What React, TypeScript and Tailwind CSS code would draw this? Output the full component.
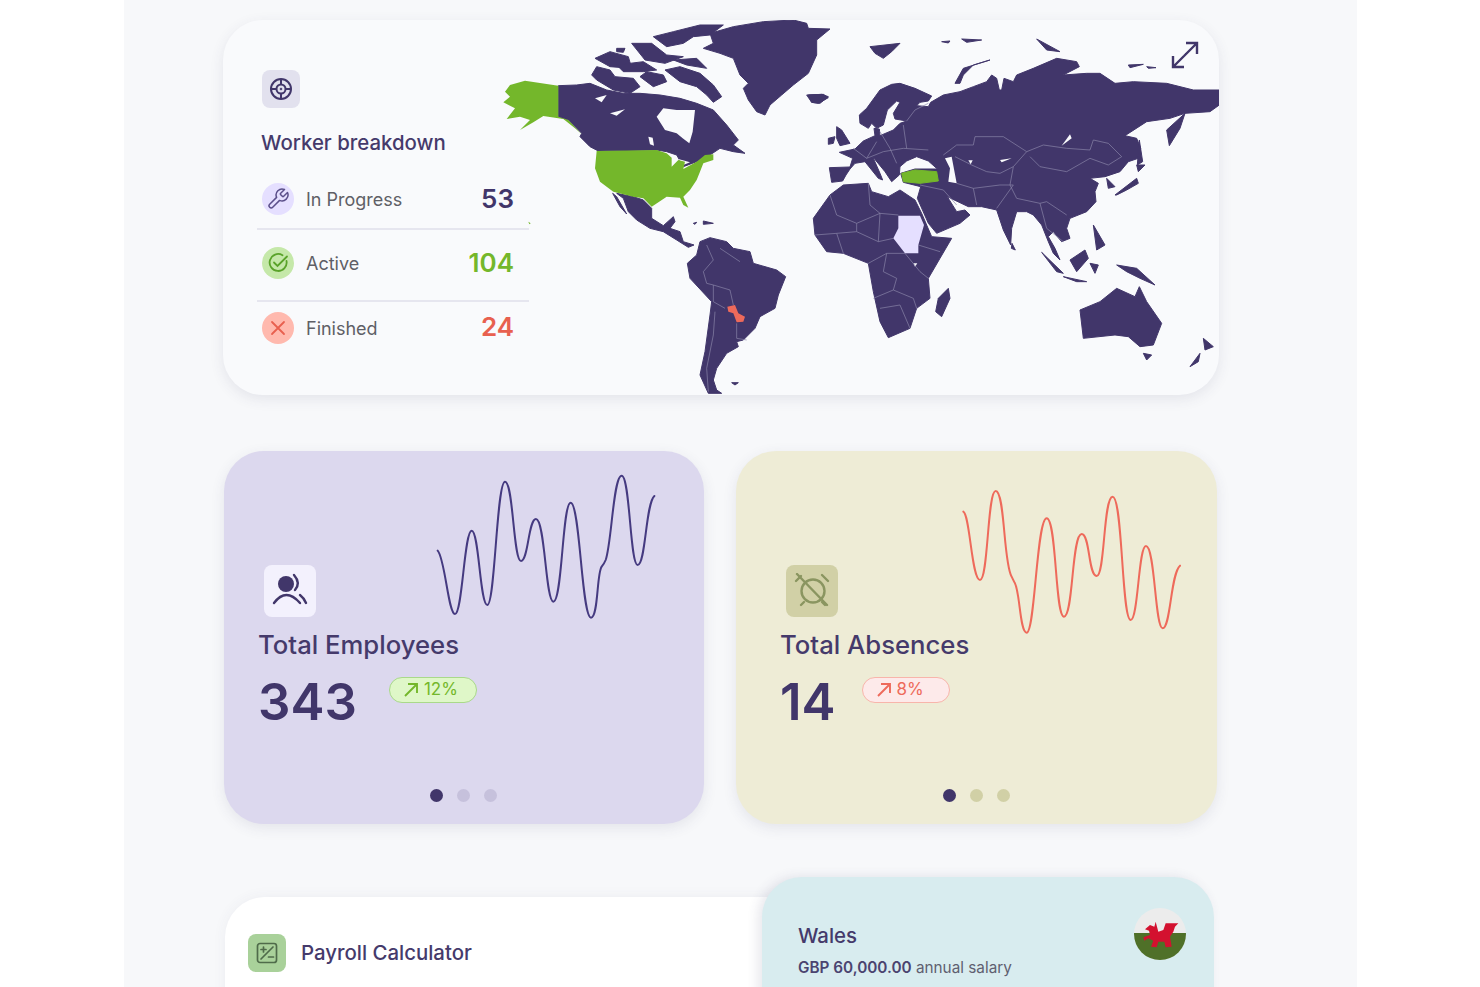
const font = "font-['Inter',sans-serif]";

function ZoomA({ children }: { children: React.ReactNode }) {
  return <g transform="translate(500 15) scale(0.33333)">{children}</g>;
}

function ZoomB({ children }: { children: React.ReactNode }) {
  return <g transform="translate(800 15) scale(0.33333)">{children}</g>;
}

const dark = "#41366a";
const sea = "#f9fafc";
const line = "#8d88aa";
const green = "#74b72b";

const americas = [
  "175,212 230,210 270,205 320,225 370,235 420,235 480,240 540,250 590,265 640,285 680,330 715,375 700,390 735,415 700,410 660,400 630,420 590,440 550,455 530,420 500,410 470,405 295,408 270,395 240,365 245,355 205,315 175,305",
  "275,180 290,155 330,165 345,185 400,190 420,215 390,235 340,225 290,195",
  "285,130 330,110 385,125 395,160 330,155",
  "460,65 520,50 600,30 670,30 630,60 580,65 550,85 500,95",
  "395,85 455,85 500,120 550,125 495,145 435,135",
  "350,150 430,140 470,165 430,170 370,170",
  "520,135 590,130 620,160 560,150",
  "495,165 540,155 600,175 640,210 665,245 640,262 620,240 590,215 540,200",
  "440,170 490,180 500,200 460,215 420,185",
  "350,100 375,100 370,112 350,110",
  "630,55 700,35 790,20 880,15 920,25 925,40 990,42 950,75 950,120 925,175 880,210 845,240 810,270 795,300 770,290 745,255 730,220 745,205 720,180 700,130 660,115 610,100 640,85",
  "925,240 965,238 985,245 960,265 935,262",
  "350,535 400,545 430,555 455,580 455,610 490,632 520,605 525,620 510,640 540,650 550,680 582,690 565,697 530,675 490,650 450,640 410,615 385,590 370,550",
  "338,535 350,545 380,597 360,575",
  "580,625 590,622 585,628",
  "610,618 640,625 610,628",
  "600,680 630,668 680,680 700,700 750,710 760,745 830,765 857,785 835,840 825,880 780,905 765,940 730,975 710,980 715,995 680,1015 650,1060 640,1095 650,1125 665,1135 625,1135 600,1080 615,1010 630,900 635,860 570,790 562,745 590,720",
  "695,1103 715,1103 705,1110",
];

const americaLakes = [
  "470,305 490,280 530,285 585,285 578,350 568,385 548,370 530,355 495,345",
  "285,250 320,240 305,262",
  "330,295 375,283 350,302",
  "445,365 458,368 462,392 450,388",
  "520,425 530,430 520,458 515,450",
  "535,432 570,442 550,450",
];

const eurasia = [
  "88,458 150,456 158,430 118,412 165,402 190,378 225,362 222,340 238,342 240,362 280,345 300,325 320,318 285,312 280,295 300,262 290,258 262,285 250,330 230,340 215,325 205,340 180,325 178,300 200,280 240,225 275,208 300,205 345,220 395,243 385,258 360,262 350,272 385,275 392,262 430,240 480,230 520,215 560,200 575,180 590,190 598,225 605,225 612,190 640,200 650,180 700,160 770,130 830,140 838,155 790,180 860,175 900,175 945,205 1000,200 1100,205 1180,225 1260,225 1258,270 1230,290 1155,295 1110,310 1040,320 975,362 1010,370 1022,400 1015,430 985,440 960,470 915,485 870,490 895,505 885,530 888,560 860,590 810,610 800,640 810,670 785,680 760,650 745,665 765,700 780,735 760,715 745,680 725,630 700,600 680,590 650,590 635,640 632,690 610,645 590,585 545,575 505,575 442,545 470,590 495,585 510,600 480,625 410,655 385,625 352,550 362,515 310,502 302,475 345,462 412,462 385,438 350,425 320,438 300,455 298,480 275,500 255,470 218,425 240,475 248,495 235,490 195,440 165,445 150,462 138,480 128,498 95,502",
  "210,95 300,85 275,110 250,130 225,115",
  "425,80 450,78 445,84",
  "485,72 545,75 500,82",
  "465,205 490,160 570,135 520,150 490,180 480,205",
  "1018,375 1028,440 1012,450",
  "1155,295 1140,340 1108,392 1100,345",
  "945,540 1010,490 1015,505 980,525 950,540",
  "1010,450 1035,450 1015,470",
  "985,150 1030,148 990,158",
  "1040,155 1068,158 1045,160",
  "710,72 780,110 740,105",
  "725,712 790,775 770,770",
  "790,785 860,800 830,800",
  "810,735 855,705 865,730 830,770",
  "870,745 895,750 885,775",
  "950,750 1010,760 1065,810 1020,790 980,770",
  "880,630 915,690 890,705",
  "840,885 900,860 950,820 1005,845 1018,815 1040,860 1085,925 1060,990 1020,995 985,965 945,960 850,970",
  "1030,1015 1055,1020 1040,1035",
  "1210,970 1240,995 1215,1005",
  "1200,1015 1170,1055 1195,1040",
  "636,685 646,705 634,700",
  "920,490 945,515 925,520",
  "40,610 90,540 130,510 205,505 215,530 265,545 300,525 345,555 365,595 395,665 455,670 420,730 385,790 390,850 350,880 330,940 265,968 240,920 220,830 205,745 130,715 80,710 45,660",
  "445,820 450,850 425,905 407,890 415,850",
  "110,335 125,345 150,385 120,392 110,370",
  "85,370 105,365 100,385 85,388",
  "20,240 70,238 85,248 55,265 35,262",
];

const seas = [
  "435,430 455,425 470,505 445,500 450,460",
  "810,358 815,370 785,392",
  "600,435 635,430 605,442",
  "505,436 518,436 512,448",
  "340,745 352,745 345,755",
];

const borders = [
  "430,420 470,390 520,390 525,365 610,365 680,410 640,455 600,475 560,470 515,450 465,425",
  "680,410 730,390 800,400 870,405 880,375 925,385 965,425 925,450 870,430 800,470 720,455 690,425",
  "640,455 630,510 650,550 720,565 740,560 800,600",
  "470,505 520,520 600,510 640,510 590,580",
  "360,510 430,525 470,570",
  "520,520 530,570",
  "720,565 740,640 790,680",
  "160,400 200,430 250,410 310,400 385,405",
  "240,350 270,400 290,445",
  "310,330 320,400",
  "200,430 230,380",
  "320,318 345,285 385,265",
  "90,540 110,600 170,625 240,595 295,600",
  "205,505 210,570 240,595 235,680",
  "45,660 110,655 170,650 235,680 280,670",
  "110,655 130,715",
  "170,625 170,650",
  "205,745 260,715 315,715 360,770 385,790",
  "260,715 250,770 290,790 280,825 220,850",
  "280,825 340,850 350,880",
  "240,880 300,870 330,940",
  "355,690 420,710",
];

const saBorders = [
  "620,690 640,735 610,770 620,805 640,810 640,860 675,880",
  "640,810 690,825 700,870",
  "660,700 720,740",
  "645,890 640,960 620,1060 625,1130",
  "710,925 710,970 740,975",
];

function WorldMap() {
  return (
    <svg className="absolute left-0 top-0 size-full" viewBox="223 20 996 375" fill="none">
      <ZoomA>
        {americas.map((p) => <polygon key={p} points={p} fill={dark} stroke={dark} strokeWidth="3" strokeLinejoin="round" />)}
        {americaLakes.map((p) => <polygon key={p} points={p} fill={sea} />)}
        <polygon points="75,197 175,212 175,305 205,315 245,358 225,340 190,312 130,303 100,322 60,345 90,315 60,305 20,312 45,280 10,262 30,245 15,230 30,210" fill={green} />
        <polygon points="290,408 470,405 500,415 515,428 515,455 535,435 555,440 550,462 590,440 615,420 640,418 640,435 610,445 600,470 590,495 570,525 550,545 565,578 550,570 540,548 500,545 455,575 430,550 400,545 340,530 300,500 285,460" fill={green} />
        <polygon points="85,620 92,625 88,628" fill={green} />
        <polygon points="682,875 705,870 715,895 735,905 730,920 710,922 700,895 685,890" fill="#ee6a5b" />
        {saBorders.map((p) => <polyline key={p} points={p} stroke={line} strokeWidth="2" />)}
      </ZoomA>
      <ZoomB>
        {eurasia.map((p) => <polygon key={p} points={p} fill={dark} stroke={dark} strokeWidth="3" strokeLinejoin="round" />)}
        {seas.map((p) => <polygon key={p} points={p} fill={sea} />)}
        {borders.map((p) => <polyline key={p} points={p} stroke={line} strokeWidth="2" />)}
        <polygon points="305,475 345,465 410,470 415,498 360,505 310,500" fill={green} stroke={green} strokeWidth="3" strokeLinejoin="round" />
        <polygon points="295,602 360,602 372,630 355,690 355,715 315,715 280,670 295,640" fill="#e5dfff" />
      </ZoomB>
      <path d="M1173 67 L1186 54 M1184 56 L1197 43 M1186 43 H1197 V54 M1173 56 V67 H1184" stroke={dark} strokeWidth="2.4" />
    </svg>
  );
}

function StatRow({ icon, bg, label, value, color }: { icon: React.ReactNode; bg: string; label: string; value: string; color: string }) {
  return (
    <div className="flex items-center pl-[5px] pr-[15px]">
      <div className={`flex size-8 items-center justify-center rounded-full ${bg}`}>{icon}</div>
      <span className="ml-3 flex-1 text-[18px] text-[#5f5f66]">{label}</span>
      <span className={`text-[26px] font-semibold leading-8 ${color}`}>{value}</span>
    </div>
  );
}

function WorkerCard() {
  return (
    <div className="relative h-[375px] w-[996px] rounded-[40px] bg-[#f9fafc] shadow-[0_4px_14px_rgba(60,60,100,0.1)]">
      <WorldMap />
      <div className="relative flex w-[306px] flex-col pl-[34px] pt-[50px]">
        <div className="ml-[5px] flex size-[38px] items-center justify-center rounded-lg bg-[#e2e1ee]">
          <svg className="size-6" viewBox="0 0 24 24" fill="none" stroke={dark} strokeWidth="2">
            <circle cx="12" cy="12" r="10" />
            <circle cx="12" cy="12" r="4.5" />
            <path d="M12 2v5.5M12 16.5V22M2 12h5.5M16.5 12H22" />
            <path d="M12 10.5l1.5 1.5-1.5 1.5-1.5-1.5z" fill={dark} stroke="none" />
          </svg>
        </div>
        <h2 className="ml-1 mt-[21px] text-[20.4px] font-medium leading-7 text-[#453a6b]">Worker breakdown</h2>
        <div className="mt-[26px]">
          <StatRow
            bg="bg-[#e5dfff]"
            label="In Progress"
            value="53"
            color="text-[#41366a]"
            icon={
              <svg className="size-6" viewBox="0 0 24 24" fill="none" stroke="#5b4f8a" strokeWidth="1.5" strokeLinejoin="round">
                <path d="M14.7 6.3a1 1 0 0 0 0 1.4l1.6 1.6a1 1 0 0 0 1.4 0l3.8-3.8a6 6 0 0 1-7.9 7.9l-6.9 6.9a2.1 2.1 0 0 1-3-3l6.9-6.9a6 6 0 0 1 7.9-7.9z" />
              </svg>
            }
          />
        </div>
        <div className="mt-[13px] h-0.5 bg-[#e6e6ef]" />
        <div className="mt-[17px]">
          <StatRow
            bg="bg-[#c5e8a9]"
            label="Active"
            value="104"
            color="text-[#74b72b]"
            icon={
              <svg className="size-6" viewBox="0 0 24 24" fill="none" stroke="#5aa32a" strokeWidth="1.8" strokeLinecap="round">
                <path d="M20.5 10a8.5 8.5 0 1 1-4-5.8" />
                <path d="M8 11.5l3.5 3.5L21 5.5" />
              </svg>
            }
          />
        </div>
        <div className="mt-[21px] h-0.5 bg-[#e6e6ef]" />
        <div className="mt-[9px]">
          <StatRow
            bg="bg-[#ffb9ae]"
            label="Finished"
            value="24"
            color="pb-[2px] text-[#e8604f]"
            icon={
              <svg className="size-6" viewBox="0 0 24 24" fill="none" stroke="#e8604f" strokeWidth="1.8" strokeLinecap="round">
                <path d="M6 6l12 12M18 6L6 18" />
              </svg>
            }
          />
        </div>
      </div>
    </div>
  );
}

function Spark({ d, color, x, y, viewBox }: { d: string; color: string; x: number; y: number; viewBox: string }) {
  return (
    <svg className="absolute left-0 top-0 size-full" viewBox={viewBox} fill="none">
      <g transform={`translate(${x} ${y}) scale(0.33333)`}>
        <path d={d} stroke={color} strokeWidth="6" strokeLinecap="round" />
      </g>
    </svg>
  );
}

function Trend({ value, cls, stroke }: { value: string; cls: string; stroke: string }) {
  return (
    <div className={`mt-1 flex h-[26px] w-[88px] items-center gap-[5px] rounded-full border pl-[13px] text-[17px] ${cls}`}>
      <svg className="size-4 shrink-0" viewBox="0 0 16 16" fill="none" stroke={stroke} strokeWidth="1.9">
        <path d="M2 14L14 2M5 2h9v9" />
      </svg>
      <span>{value}</span>
    </div>
  );
}

function Dots({ off, right }: { off: string; right: string }) {
  return (
    <div className={`absolute bottom-[22px] left-0 flex justify-center gap-[14px] ${right}`}>
      <div className="size-[13px] rounded-full bg-[#41366a]" />
      <div className={`size-[13px] rounded-full ${off}`} />
      <div className={`size-[13px] rounded-full ${off}`} />
    </div>
  );
}

function EmployeesCard() {
  return (
    <div className="relative h-[373px] w-[480px] rounded-[40px] bg-[#dcd8ee] pl-[34px] pt-[114px] shadow-[0_4px_14px_rgba(60,60,100,0.1)]">
      <Spark
        color="#453a80"
        viewBox="224 451 480 373"
        x={225}
        y={460}
        d="M638 272 C660 295 670 462 690 462 C712 462 718 212 740 212 C762 212 765 435 787 435 C810 435 815 65 840 65 C865 65 865 303 888 303 C910 303 910 177 933 177 C960 177 962 425 985 425 C1012 425 1012 128 1037 128 C1065 128 1070 473 1098 473 C1120 473 1115 340 1130 320 C1138 310 1140 305 1142 300 C1160 250 1165 47 1190 47 C1215 47 1215 315 1238 315 C1262 315 1262 130 1288 108"
      />
      <div className="relative ml-[6px] flex size-[52px] items-center justify-center rounded-lg bg-[#f3f1fd]">
        <svg className="size-9" viewBox="0 0 36 36" fill="none" stroke="#41366a" strokeWidth="2.4" strokeLinecap="round">
          <circle cx="14" cy="11" r="8" fill="#41366a" stroke="none" />
          <path d="M22 2Q29 10 23 17" />
          <path d="M2 30Q14 14 28 30" />
          <path d="M28 22Q32 25 34 30" />
        </svg>
      </div>
      <p className="relative mt-[13px] text-[25.7px] font-medium leading-[30px] text-[#453a6b]">Total Employees</p>
      <div className="relative mt-[13px] flex items-start">
        <span className="text-[51px] font-semibold leading-[58px] text-[#41366a]">343</span>
        <div className="ml-[32px]">
          <Trend value="12%" cls="border-[#a9d98a] bg-[#dff7c8] text-[#74b72b]" stroke="#74b72b" />
        </div>
      </div>
      <Dots off="bg-[#c6c1dc]" right="right-[2px]" />
    </div>
  );
}

function AbsencesCard() {
  return (
    <div className="relative h-[373px] w-[481px] rounded-[40px] bg-[#eeecd6] pl-[44px] pt-[114px] shadow-[0_4px_14px_rgba(60,60,100,0.1)]">
      <Spark
        color="#ee6a5b"
        viewBox="736 451 481 373"
        x={740}
        y={460}
        d="M670 155 C690 165 695 360 720 360 C745 360 742 93 767 93 C795 93 790 310 815 350 C820 360 822 365 825 370 C840 400 840 518 860 518 C885 518 890 175 920 175 C950 175 945 470 972 470 C1000 470 995 222 1025 222 C1050 222 1045 348 1070 348 C1095 348 1090 110 1118 110 C1148 110 1145 480 1172 480 C1195 480 1195 258 1218 258 C1245 258 1245 505 1268 505 C1292 505 1292 340 1320 317"
      />
      <div className="relative ml-[6px] flex size-[52px] items-center justify-center rounded-lg bg-[#d1d0a6]">
        <svg className="size-9" viewBox="0 0 36 36" fill="none" stroke="#8a9560" strokeWidth="2.4" strokeLinecap="round">
          <circle cx="19" cy="18" r="11.5" />
          <path d="M3 1L33 32" />
          <path d="M28 2L34 8M2 8L7 3M7 32L10 29M28 29L31 32" />
        </svg>
      </div>
      <p className="relative mt-[13px] text-[25.7px] font-medium leading-[30px] text-[#453a6b]">Total Absences</p>
      <div className="relative mt-[13px] flex items-start">
        <span className="text-[51px] font-semibold leading-[58px] text-[#41366a]">14</span>
        <div className="ml-[26px]">
          <Trend value="8%" cls="border-[#f8b5ab] bg-[#fdeaea] text-[#ee6a5b]" stroke="#ee6a5b" />
        </div>
      </div>
      <Dots off="bg-[#d1d0a6]" right="right-0" />
    </div>
  );
}

function WalesFlag() {
  return (
    <div className="size-[52px] overflow-hidden rounded-full bg-[#ececec]">
      <svg className="size-full" viewBox="0 0 52 52">
        <rect y="25" width="52" height="27" fill="#4f7028" />
        <g transform="translate(-9 -8) scale(0.33333)">
          <polygon
            points="60,88 75,75 88,80 92,65 100,95 115,90 122,70 160,70 150,80 145,95 135,110 140,140 122,142 118,125 100,125 95,142 78,140 85,122 70,115 58,122 55,112 75,105 72,92"
            fill="#d3112f"
          />
        </g>
      </svg>
    </div>
  );
}

function BottomRow() {
  return (
    <div className="mt-[53px] flex items-start pl-[2px]">
      <div className="mt-[20px] h-[200px] w-[580px] rounded-t-[40px] bg-white pl-[23px] pt-[37px] shadow-[0_0_14px_rgba(60,60,100,0.06)]">
        <div className="flex items-center gap-[15px]">
          <div className="flex size-[38px] items-center justify-center rounded-lg bg-[#a9d19a]">
            <svg className="size-6" viewBox="0 0 24 24" fill="none" stroke="#4f6b4a" strokeWidth="1.7" strokeLinecap="round">
              <rect x="2.5" y="2.5" width="19" height="19" rx="2.5" />
              <path d="M6 18L18 6M6 8.5h5M8.5 6v5M13.5 16h5" />
            </svg>
          </div>
          <span className="text-[20.4px] font-medium text-[#453a6b]">Payroll Calculator</span>
        </div>
      </div>
      <div className="relative ml-[-43px] flex h-[200px] w-[452px] items-start justify-between rounded-t-[40px] bg-[#d8ecef] pl-[36px] pr-[28px] pt-[31px] shadow-[-4px_0_12px_rgba(60,60,100,0.12)]">
        <div className="pt-[14px]">
          <p className="text-[20.4px] font-medium leading-[28px] text-[#453a6b]">Wales</p>
          <p className="mt-[8px] text-[15.3px] leading-[20px] text-[#5f5f70]">
            <span className="font-semibold text-[#4b4470]">GBP 60,000.00</span> annual salary
          </p>
        </div>
        <WalesFlag />
      </div>
    </div>
  );
}

export default function App() {
  return (
    <div className={`h-[987px] overflow-hidden bg-white ${font}`}>
      <div className="mx-[124px] h-full w-[1233px] overflow-hidden bg-[#f7f8fa] pl-[99px] pt-5">
        <WorkerCard />
        <div className="ml-px mt-[56px] flex gap-8">
          <EmployeesCard />
          <AbsencesCard />
        </div>
        <BottomRow />
      </div>
    </div>
  );
}
